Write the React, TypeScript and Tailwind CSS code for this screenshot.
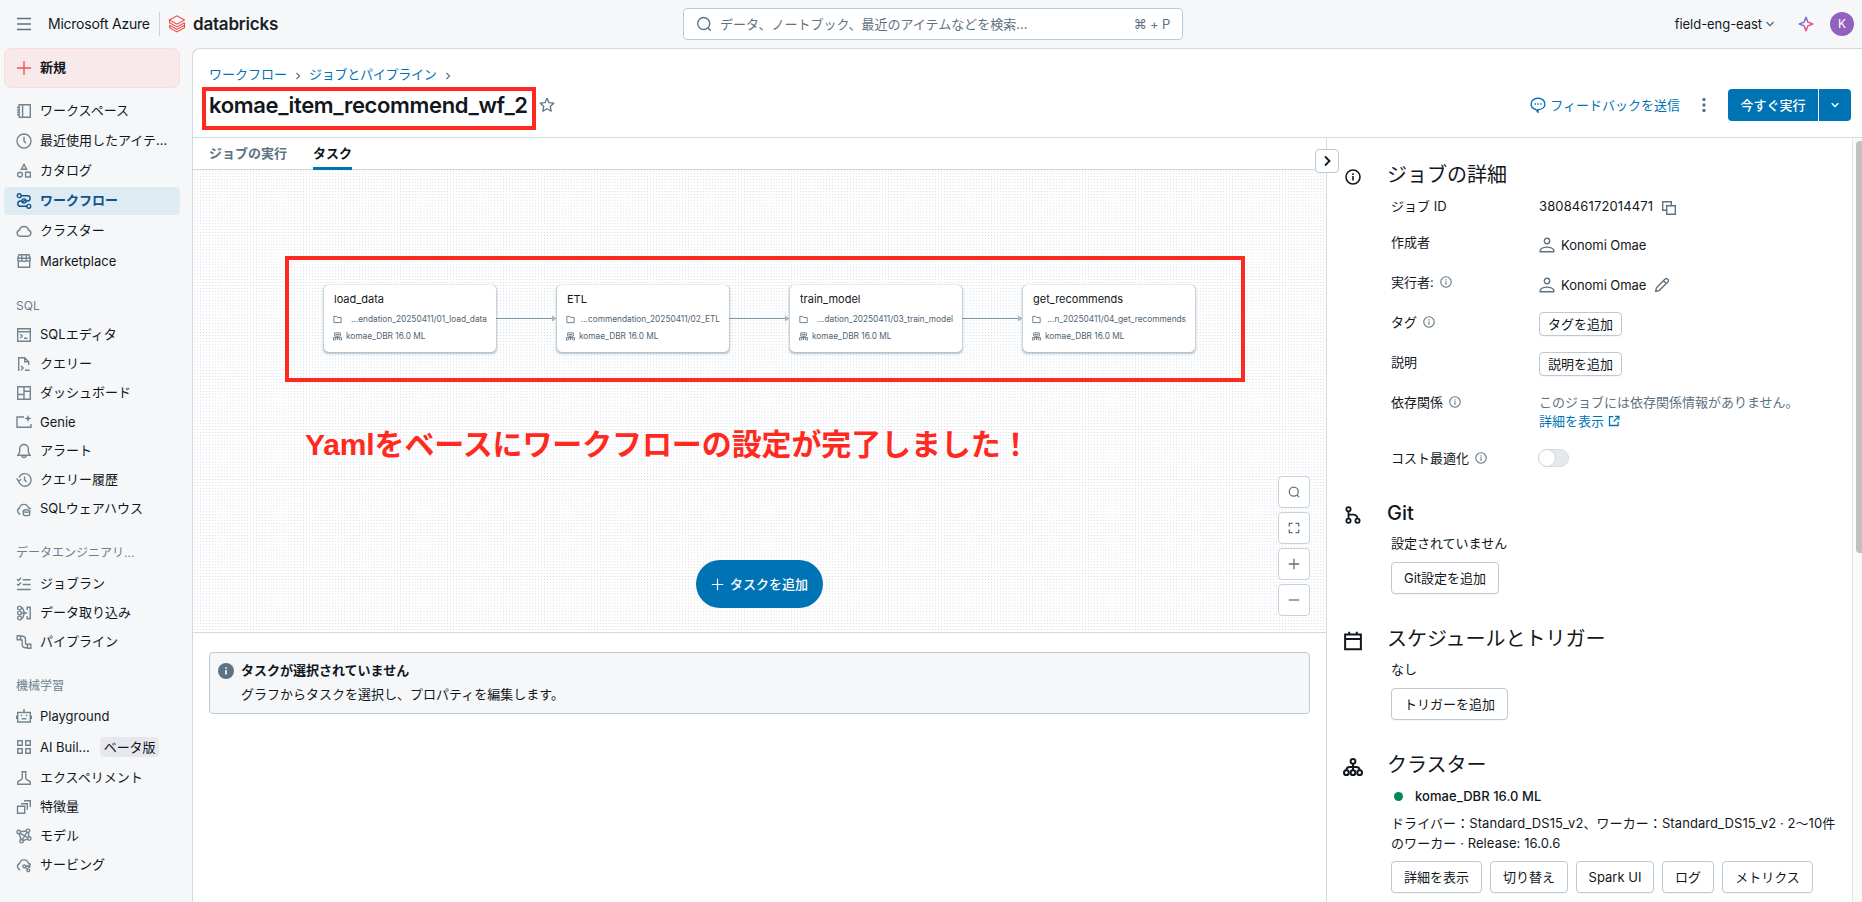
import React from "react";

type IconProps = { className?: string; size?: number; children?: React.ReactNode; sw?: number };

function Svg({ className = "", size = 16, sw = 1.4, children }: IconProps) {
  return (
    <svg
      width={size}
      height={size}
      viewBox="0 0 16 16"
      fill="none"
      stroke="currentColor"
      strokeWidth={sw}
      className={"shrink-0 " + className}
    >
      {children}
    </svg>
  );
}

const icons: Record<string, React.ReactNode> = {
  workspace: (
    <>
      <path d="M3.2 1.8h11.1v12.4H3.2zM6.6 1.8v12.4M1 4.3h2.2M1 6.8h2.2M1 9.3h2.2M1 11.8h2.2" />
    </>
  ),
  clock: (
    <>
      <circle cx="8" cy="8" r="7" />
      <path d="M8 3.8V8l2 2.2" />
    </>
  ),
  catalog: (
    <>
      <path d="M8 1.4 10.6 6.3H5.4z" />
      <circle cx="4" cy="11.6" r="2.4" />
      <path d="M9.6 9.3h4.7V14H9.6z" />
    </>
  ),
  workflow: (
    <>
      <circle cx="3.2" cy="2.700" r="1.900" />
      <circle cx="8" cy="8" r="2.100" />
      <circle cx="12.800" cy="13.300" r="1.900" />
      <path d="M5.100 2.700h6.400a2.650 2.650 0 0 1 0 5.300H10.100M5.900 8H4.500a2.650 2.650 0 0 0 0 5.300h6.400M6.300 9.600l3.300-3.200" />
    </>
  ),
  cloud: <path d="M4 13.300a3.200 3.200 0 0 1-.4-6.300 4.500 4.500 0 0 1 8.800 0A3.200 3.200 0 0 1 12 13.300z" />,
  market: (
    <>
      <path d="M2.300 8v6.300h11.400V8M3 1.800h10l1.300 3.600v.8a1.900 1.900 0 0 1-3.900 0 2.200 2.200 0 0 1-4.600 0 1.900 1.900 0 0 1-4.100 0v-.8zM5.800 6V2M10.300 6V2M1.800 5.200h12.400" />
    </>
  ),
  sqleditor: (
    <>
      <path d="M1.700 1.700h12.600v12.600H1.700zM1.700 4.700h12.600M4.300 7.300l2 1.800-2 1.800M8 11.200h3.500" />
    </>
  ),
  query: (
    <>
      <path d="M2.700 15V1.700h6l4 4V9M8.700 1.700v4h4M5 10l2.200 2L5 14.200M9 14.300h4.700" />
    </>
  ),
  dashboard: <path d="M1.700 1.700h12.600v12.600H1.700zM8 1.700v12.600M1.700 9.500H8M8 6.200h6.300" />,
  genie: (
    <>
      <path d="M8 3H1v10.300h14V10" />
      <path d="M12 .8l1 2.700 2.700 1-2.700 1-1 2.700-1-2.700-2.700-1 2.700-1z" fill="currentColor" stroke="none" />
    </>
  ),
  bell: <path d="M8 1.500a4.300 4.300 0 0 0-4.300 4.300v3L1.900 12.200h12.200L12.300 8.800v-3A4.300 4.300 0 0 0 8 1.500zM6 12.500a2 2 0 0 0 4 0" />,
  history: (
    <>
      <path d="M2.600 9.200A6.300 6.300 0 1 0 3 5.400M8.600 4.500V8l2 2M.6 6.400l2 2.800 2.600-2" />
    </>
  ),
  warehouse: (
    <>
      <path d="M4.300 13.200A3.300 3.300 0 0 1 3.500 7a4.600 4.600 0 0 1 8.900-.3 3 3 0 0 1 2.300 1.500" />
      <ellipse cx="10.500" cy="10" rx="3.200" ry="1.300" />
      <path d="M7.300 10v3.300c0 .8 1.400 1.300 3.200 1.300s3.200-.5 3.200-1.300V10" />
    </>
  ),
  jobruns: <path d="M1 3.200l1.500 1.300L5 1.700M1 8l1.500 1.300L5 6.500M6.700 3.700h8M6.700 8.500h8M1 13.500h13.700" />,
  ingest: (
    <>
      <circle cx="3.500" cy="3" r="1.900" />
      <circle cx="3.500" cy="8" r="1.900" />
      <circle cx="3.500" cy="13" r="1.900" />
      <path d="M5.400 3h1.200l1.900 5-1.900 5H5.400M5.400 8h5.800M11.200 5V2.200h3v11.600h-3V11" />
    </>
  ),
  pipeline: (
    <>
      <path d="M1.200 1.700h3.300v4H1.200zM11.500 10.300h3.300v4h-3.300z" />
      <path d="M4.500 2.200h2a3 3 0 0 1 3 3v3.500a2 2 0 0 0 2 2M4.500 5.300a1.700 1.700 0 0 1 1.700 1.700v3.800a3 3 0 0 0 3 3h2.300" />
    </>
  ),
  robot: (
    <>
      <path d="M1.700 4.500h12.600v9.500H1.700zM8 4.500V1M.7 7.500v3.500M15.300 7.500v3.500M5.500 10.800h5" />
      <path d="M4.700 7.500h1.500M9.800 7.500h1.500" />
    </>
  ),
  grid: <path d="M1.700 1.700h4.500v4.500H1.700zM9.800 1.700h4.500v4.500H9.800zM1.700 9.800h4.500v4.500H1.700zM9.800 9.800h4.500v4.500H9.800z" />,
  flask: <path d="M5.500 1.700h5M6.300 1.700v6.600c0 1.200-1 1.600-2.600 2.200-1.200.4-2 1-2 2v1.800h12.600v-1.800c0-1-.8-1.600-2-2-1.600-.6-2.600-1-2.600-2.200V1.700" />,
  feature: <path d="M1.500 7.300h7.200v7H1.500zM5 4.800h6.300v6M8 1.700h6.300V8" />,
  model: (
    <>
      <circle cx="2.700" cy="4" r="1.700" />
      <circle cx="12" cy="2.800" r="1.700" />
      <circle cx="13.300" cy="10.500" r="1.700" />
      <circle cx="5.500" cy="13.200" r="1.700" />
      <path d="M4.400 3.800l6-.8M12.200 4.500l.9 4.300M3.200 5.700l1.800 5.800M7 12.600l4.700-1.600M4 5.200l7.800 4.400M11 4.200 6.400 11.700" />
    </>
  ),
  serving: (
    <>
      <path d="M4.300 12.800A3.300 3.300 0 0 1 3.500 6.500a4.600 4.600 0 0 1 8.900-.3 3 3 0 0 1 2.300 1.700" />
      <circle cx="8.300" cy="9.300" r="1.400" />
      <circle cx="12.300" cy="13.300" r="1.400" />
      <circle cx="13" cy="9.300" r="1" />
      <path d="M9.300 10.300l2 2M9.700 9.300H12" />
    </>
  ),
  info: (
    <>
      <circle cx="8" cy="8" r="7" />
      <path d="M8 7v4.500M8 4.300v1.600" />
    </>
  ),
  user: (
    <>
      <circle cx="8" cy="4" r="2.700" />
      <path d="M1.200 14.800v-1.600C2 11.300 4.800 10.100 8 10.100s6 1.200 6.800 3.100v1.600z" />
    </>
  ),
  pencil: <path d="M1.700 14.300l.7-3.500 8.800-8.800a1.500 1.500 0 0 1 2.200 0l.6.600a1.500 1.500 0 0 1 0 2.200l-8.800 8.800zM9.500 3.700l2.800 2.800" />,
  copy: <path d="M5.700 5.700h8.600v8.600H5.700zM5.700 10.300h-4v-8.600h8.600v4" />,
  folder: <path d="M1.500 13.500v-11h5l1.700 2h6.300v9z" />,
  external: <path d="M7 2.200H2v11.800h11.500V9M9.500 1.700h5v5M14.300 2 7.500 8.800" />,
  search: (
    <>
      <circle cx="7.700" cy="7.500" r="6" />
      <path d="M11.800 11.800l3 3" />
    </>
  ),
  expand: <path d="M1.700 6V1.700H6M10 1.700h4.300V6M14.300 10v4.300H10M6 14.300H1.700V10" />,
  plus: <path d="M8 1v14M1 8h14" />,
  minus: <path d="M1 8h14" />,
  star: <path d="M8 1.300l2 4.400 4.800.5-3.600 3.200 1 4.800L8 11.800l-4.200 2.400 1-4.800L1.200 6.200 6 5.700z" strokeLinejoin="round" />,
  chat: (
    <>
      <path d="M8 1.300c3.900 0 6.900 2.300 6.900 5.600S11.900 12.500 8 12.600v2.600l-2.300-2.900C3 11.600 1.100 9.600 1.100 6.900 1.100 3.600 4.100 1.300 8 1.300z" />
      <path d="M4.500 7h1.400M7.300 7h1.400M10.100 7h1.400" />
    </>
  ),
  git: (
    <>
      <circle cx="4" cy="2.900" r="1.900" />
      <circle cx="4" cy="13.100" r="1.900" />
      <circle cx="12" cy="13.100" r="1.900" />
      <path d="M4 4.800v6.400M4 7.700h4.500a3.500 3.500 0 0 1 3.500 3.500" />
    </>
  ),
  calendar: <path d="M1.700 2.700h12.600v11.800H1.700zM1.700 6.300h12.600M5 .5v2.200M11 .5v2.200" />,
  cluster: (
    <>
      <circle cx="8" cy="3.500" r="1.900" />
      <circle cx="2.700" cy="12.500" r="1.900" />
      <circle cx="8" cy="12.500" r="1.900" />
      <circle cx="13.300" cy="12.500" r="1.900" />
      <path d="M8 5.400v5.200M2.700 10.600c0-2 1.600-2.600 3-2.600h4.600c1.400 0 3 .6 3 2.600" />
    </>
  ),
  server: <path d="M3 1.500h10v5.800H3zM5 4.400h6M8 7.300v7M1 14.500V10h14v4.500M4.800 10v4.500M11.200 10v4.500M1 14.400h2M13 14.400h2" />,
};

function Icon({ name, className, size, sw }: { name: string; className?: string; size?: number; sw?: number }) {
  return (
    <Svg className={className} size={size} sw={sw}>
      {icons[name]}
    </Svg>
  );
}

function NavItem({ icon, label, active, tall, badge }: { icon: string; label: string; active?: boolean; tall?: boolean; badge?: string }) {
  const latin = /^[\x20-\x7e]+$/.test(label);
  return (
    <div className={tall ? "flex h-[30px] items-center" : "flex h-[29px] items-center"}>
      <div
        className={
          "flex h-7 w-44 items-center gap-2 rounded px-3 whitespace-nowrap " +
          (active ? "bg-[#dfebf3] font-semibold text-[#0e538b]" : "text-[#11171c]")
        }
      >
        <Icon name={icon} className={active ? "text-[#0e538b]" : "text-[#74848f]"} />
        <span className={latin ? "leading-5" : "mb-[2px] leading-5"}>{label}</span>
        {badge && <span className="ml-[2px] rounded bg-[#e6e8ed] px-1 leading-5 tracking-[-0.150px]">{badge}</span>}
      </div>
    </div>
  );
}

function NavHeader({ children }: { children: React.ReactNode }) {
  return <div className="flex h-5 items-center px-3 text-[12px] whitespace-nowrap text-[#6b7f8e]">{children}</div>;
}

function Sidebar() {
  return (
    <aside className="flex w-[192px] shrink-0 flex-col pl-1">
      <div className="mb-2 flex h-10 w-44 items-center gap-2 rounded-lg border border-[#fbdcdc] bg-[#f8e9ea] px-[11px] font-semibold">
        <Icon name="plus" className="text-[#f0525a]" />
        <span className="mb-[2px]">新規</span>
      </div>
      <NavItem tall icon="workspace" label="ワークスペース" />
      <NavItem tall icon="clock" label="最近使用したアイテ..." />
      <NavItem tall icon="catalog" label="カタログ" />
      <NavItem tall icon="workflow" label="ワークフロー" active />
      <NavItem tall icon="cloud" label="クラスター" />
      <NavItem tall icon="market" label="Marketplace" />
      <div className="mt-5 mb-1">
        <NavHeader>SQL</NavHeader>
      </div>
      <NavItem icon="sqleditor" label="SQLエディタ" />
      <NavItem icon="query" label="クエリー" />
      <NavItem icon="dashboard" label="ダッシュボード" />
      <NavItem icon="genie" label="Genie" />
      <NavItem icon="bell" label="アラート" />
      <NavItem icon="history" label="クエリー履歴" />
      <NavItem icon="warehouse" label="SQLウェアハウス" />
      <div className="mt-5 mb-[6px]">
        <NavHeader>データエンジニアリ...</NavHeader>
      </div>
      <NavItem icon="jobruns" label="ジョブラン" />
      <NavItem icon="ingest" label="データ取り込み" />
      <NavItem icon="pipeline" label="パイプライン" />
      <div className="mt-5 mb-[5px]">
        <NavHeader>機械学習</NavHeader>
      </div>
      <NavItem tall icon="robot" label="Playground" />
      <div className="py-px">
        <NavItem tall icon="grid" label="AI Buil..." badge="ベータ版" />
      </div>
      <NavItem icon="flask" label="エクスペリメント" />
      <NavItem icon="feature" label="特徴量" />
      <NavItem icon="model" label="モデル" />
      <NavItem icon="serving" label="サービング" />
    </aside>
  );
}

function TopBar() {
  return (
    <header className="flex h-12 shrink-0 items-center">
      <div className="flex w-[683px] items-center">
        <svg width="16" height="16" viewBox="0 0 16 16" className="ml-4 text-[#5f7281]" stroke="currentColor" strokeWidth="1.500">
          <path d="M1 2.500h14M1 8h14M1 13.500h14" />
        </svg>
        <span className="ml-4 w-[103px] text-[14px] tracking-[-0.240px] whitespace-nowrap">Microsoft Azure</span>
        <span className="ml-2 h-6 w-px bg-[#c9d4de]" />
        <svg width="18" height="18" viewBox="0 0 18 18" className="ml-2" fill="none" stroke="#ee4a42" strokeWidth="1.050">
          <path d="M1.500 5 9 .9 16.500 5 9 9.100zM1.500 5v2.800L9 12l7.500-4.200M1.500 10.300 9 14.500l7.500-4.200V7.800M1.500 10.300v2.500L9 17l7.500-4.200v-2.500M1.500 7.800 9 11.900" />
        </svg>
        <span className="ml-[7px] text-[17px] leading-6 font-semibold tracking-[-0.200px] text-[#1b2127]">databricks</span>
      </div>
      <div className="flex h-8 w-[500px] items-center rounded border border-[#bccad6] bg-white px-3 text-[#5f7281]">
        <Icon name="search" />
        <span className="ml-2 grow">データ、ノートブック、最近のアイテムなどを検索...</span>
        <span className="text-[13px] tracking-[-0.200px]">⌘ + P</span>
      </div>
      <div className="flex grow items-center justify-end pr-2">
        <span className="tracking-[-0.050px]">field-eng-east</span>
        <svg width="10" height="10" viewBox="0 0 10 10" className="ml-[3px]" fill="none" stroke="#5f7281" strokeWidth="1.400">
          <path d="M1.500 3 5 6.700 8.500 3" />
        </svg>
        <svg width="16" height="16" viewBox="0 0 16 16" className="ml-[23px]" fill="none" stroke="url(#spark)" strokeWidth="1.500">
          <defs>
            <linearGradient id="spark" x1="0" y1="0" x2="1" y2="1">
              <stop offset="0.200" stopColor="#4a7fe8" />
              <stop offset="0.550" stopColor="#e24f9c" />
              <stop offset="0.900" stopColor="#f5544c" />
            </linearGradient>
          </defs>
          <path d="M8 1.300 9.900 6.100 14.700 8 9.900 9.900 8 14.700 6.100 9.900 1.300 8 6.100 6.100z" strokeLinejoin="round" />
        </svg>
        <span className="ml-4 flex size-6 items-center justify-center rounded-full bg-[#9062bd] text-[12px] text-white">K</span>
      </div>
    </header>
  );
}

function PageHeader() {
  return (
    <div className="flex h-[89px] shrink-0 border-b border-[#d1dae2] pl-4">
      <div className="flex grow flex-col">
        <div className="mt-[15px] flex h-5 items-center text-[#0073b4]">
          <span>ワークフロー</span>
          <Crumb />
          <span className="tracking-[-0.250px]">ジョブとパイプライン</span>
          <Crumb />
        </div>
        <div className="mt-[5px] flex h-8 items-center">
          <div className="relative">
            <h1 className="w-[322px] text-[22px] leading-8 font-semibold tracking-[-0.350px] whitespace-nowrap">komae_item_recommend_wf_2</h1>
            <div className="absolute -top-[2px] -left-[7px] h-[43px] w-[334px] border-4 border-[#ff2a1f]" />
          </div>
          <Icon name="star" className="ml-[8px] text-[#5f7281]" sw={1.3} />
        </div>
      </div>
      <div className="mt-10 mr-[11px] flex h-8 items-center">
        <Icon name="chat" className="text-[#0073b4]" />
        <span className="mb-px ml-1 text-[#0073b4]">フィードバックを送信</span>
        <svg width="16" height="16" viewBox="0 0 16 16" className="ml-4" fill="#5f7281">
          <circle cx="8" cy="2.500" r="1.700" />
          <circle cx="8" cy="8" r="1.700" />
          <circle cx="8" cy="13.500" r="1.700" />
        </svg>
        <button className="ml-4 flex h-8 w-[90px] items-center justify-center rounded-l bg-[#0073b4] font-medium text-white">今すぐ実行</button>
        <button className="ml-px flex h-8 w-8 items-center justify-center rounded-r bg-[#0073b4]">
          <svg width="10" height="10" viewBox="0 0 10 10" fill="none" stroke="#fff" strokeWidth="1.500">
            <path d="M1.700 3.200 5 6.500l3.300-3.300" />
          </svg>
        </button>
      </div>
    </div>
  );
}

function Crumb() {
  return (
    <svg width="6" height="8" viewBox="0 0 6 8" className="mx-[8px] mt-[3px]" fill="none" stroke="#5f7281" strokeWidth="1.200">
      <path d="M1.500 1 4.500 4 1.500 7" />
    </svg>
  );
}

function TaskNode({ title, path, pos }: { title: string; path: string; pos: string }) {
  return (
    <div
      className={
        "absolute top-[115px] flex h-[67px] w-[172px] flex-col rounded-[5px] bg-white px-[9px] pt-[6px] shadow-[0_1px_2px_0.500px_rgba(95,125,145,0.45)] " +
        pos
      }
    >
      <div className="pl-px text-[11px] leading-4">{title}</div>
      <div className="mt-[6px] flex h-3 items-center justify-between text-[8.300px] leading-3 whitespace-nowrap text-[#4f6474]">
        <Icon name="folder" size={9} />
        <span>{path}</span>
      </div>
      <div className="mt-[5px] flex h-3 items-center gap-[4px] text-[8.300px] leading-3 text-[#4f6474]">
        <Icon name="server" size={9} />
        <span>komae_DBR 16.0 ML</span>
      </div>
    </div>
  );
}

function Edge({ pos }: { pos: string }) {
  return (
    <svg width="61" height="8" viewBox="0 0 61 8" className={"absolute top-[144px] " + pos} fill="none">
      <path d="M0 4.500h58" stroke="#7d95a5" />
      <path d="M56 1.500 60.500 4.500 56 7.500z" fill="#a9b6c1" />
    </svg>
  );
}

function CanvasButton({ icon }: { icon: string }) {
  return (
    <button className="flex size-8 items-center justify-center rounded border border-[#c6d2dc] bg-white text-[#5f7281]">
      <Icon name={icon} size={12} sw={1.7} />
    </button>
  );
}

const DOT_PITCH = 2.94;
const dotRows = Array.from({ length: 157 }, (_, i) => `M1.200 ${(0.8 + i * DOT_PITCH).toFixed(2)}H1133`).join("");

function Canvas() {
  return (
    <div className="relative h-[463px] shrink-0 overflow-hidden border-b border-[#d1dae2]">
      <svg width="1133" height="462" className="absolute inset-0">
        <path d={dotRows} stroke="#d3dbe3" strokeWidth="1" strokeDasharray="1 1.94" fill="none" />
      </svg>
      <Edge pos="left-[303px]" />
      <Edge pos="left-[536px]" />
      <Edge pos="left-[769px]" />
      <TaskNode pos="left-[131px]" title="load_data" path="...endation_20250411/01_load_data" />
      <TaskNode pos="left-[364px]" title="ETL" path="...commendation_20250411/02_ETL" />
      <TaskNode pos="left-[597px]" title="train_model" path="...dation_20250411/03_train_model" />
      <TaskNode pos="left-[830px]" title="get_recommends" path="...n_20250411/04_get_recommends" />
      <div className="absolute top-[86px] left-[92px] h-[126px] w-[960px] border-4 border-[#ff2a1f]" />
      <div className="absolute top-[253px] left-[112px] font-['Liberation_Sans','Noto_Sans_CJK_JP',sans-serif] text-[30px] leading-[44px] font-bold tracking-[-0.120px] whitespace-nowrap text-[#ff2a1f]">
        Yamlをベースにワークフローの設定が完了しました！
      </div>
      <button className="absolute top-[390px] left-[503px] flex h-12 w-[127px] items-center rounded-[24px] bg-[#0073b4] pl-[15px] font-medium text-white">
        <Icon name="plus" size={13} />
        <span className="ml-[6px]">タスクを追加</span>
      </button>
      <div className="absolute top-[306px] left-[1085px] flex flex-col gap-1">
        <CanvasButton icon="search" />
        <CanvasButton icon="expand" />
        <CanvasButton icon="plus" />
        <CanvasButton icon="minus" />
      </div>
    </div>
  );
}

function Row({ label, info, h, children }: { label: string; info?: boolean; h: string; children: React.ReactNode }) {
  return (
    <div className={"flex items-start " + h}>
      <div className="flex h-5 w-[148px] items-center gap-[6px] leading-5">
        <span className="mb-px">{label}</span>
        {info && <Icon name="info" size={12} className="text-[#5f7281]" />}
      </div>
      {children}
    </div>
  );
}

function Section({ icon, iconSize, title, children }: { icon: string; iconSize: number; title: string; children: React.ReactNode }) {
  return (
    <section className="flex">
      <div className="flex h-8 w-[42px] shrink-0 items-center justify-start">
        <div className="flex w-4 justify-center">
          <Icon name={icon} size={iconSize} sw={1.6} />
        </div>
      </div>
      <div className="min-w-0 grow">
        <h2 className={title === "Git" ? "h-7 text-[20px] leading-7 font-medium" : "h-7 text-[20px] leading-7"}>{title}</h2>
        <div className="pl-[4px]">{children}</div>
      </div>
    </section>
  );
}

function Btn({ children, w }: { children: React.ReactNode; w: string }) {
  return (
    <button className={"flex items-center justify-center rounded border border-[#bccad6] bg-white whitespace-nowrap shadow-[0_1px_1px_rgba(0,0,0,0.04)] " + w}>
      {children}
    </button>
  );
}

function Person() {
  return (
    <>
      <Icon name="user" className="text-[#5f7281]" />
      <span className="tracking-[-0.050px]">Konomi Omae</span>
    </>
  );
}

function DetailsPanel() {
  return (
    <aside className="flex w-[536px] shrink-0 overflow-hidden border-l border-[#d1dae2]">
      <div className="flex w-[525px] shrink-0 flex-col gap-[31px] pt-[23px] pl-[18px]">
        <Section icon="info" iconSize={16} title="ジョブの詳細">
          <div className="mt-[7px]">
            <Row label="ジョブ ID" h="h-9">
              <div className="flex h-5 items-center gap-2">
                <span className="tracking-[0.120px]">380846172014471</span>
                <Icon name="copy" className="mt-1 text-[#5f7281]" />
              </div>
            </Row>
            <Row label="作成者" h="h-10">
              <div className="mt-[3px] flex h-5 items-center gap-[6px]">
                <Person />
              </div>
            </Row>
            <Row label="実行者:" info h="h-10">
              <div className="mt-[3px] flex h-5 items-center gap-[6px]">
                <Person />
                <Icon name="pencil" className="ml-[2px] text-[#5f7281]" />
              </div>
            </Row>
            <Row label="タグ" info h="h-10">
              <Btn w="h-6 w-[83px]">タグを追加</Btn>
            </Row>
            <Row label="説明" h="h-10">
              <Btn w="h-6 w-[83px]">説明を追加</Btn>
            </Row>
            <Row label="依存関係" info h="h-14">
              <div className="leading-5">
                <div className="text-[#5f7281]">このジョブには依存関係情報がありません。</div>
                <div className="-mt-px flex items-center gap-1 text-[#0073b4]">
                  詳細を表示
                  <Icon name="external" size={12} sw={1.7} />
                </div>
              </div>
            </Row>
            <Row label="コスト最適化" info h="h-5">
              <div className="mt-px -ml-px flex h-[18px] w-[31px] items-center rounded-full border border-[#d5dce3] bg-[#e5e9ee]">
                <div className="-ml-px size-[18px] rounded-full border border-[#ccd5dd] bg-white" />
              </div>
            </Row>
          </div>
        </Section>
        <Section icon="git" iconSize={18} title="Git">
          <div className="mt-[6px] mb-[9px] leading-5">設定されていません</div>
          <Btn w="h-8 w-[108px]">Git設定を追加</Btn>
        </Section>
        <Section icon="calendar" iconSize={20} title="スケジュールとトリガー">
          <div className="mt-[6px] mb-[9px] leading-5">なし</div>
          <Btn w="h-8 w-[117px]">トリガーを追加</Btn>
        </Section>
        <Section icon="cluster" iconSize={20} title="クラスター">
          <div className="mt-[7px] flex h-5 items-center font-medium">
            <span className="ml-[3px] size-[9px] rounded-full bg-[#00875c]" />
            <span className="ml-3 tracking-[0.050px]">komae_DBR 16.0 ML</span>
          </div>
          <div className="mt-[7px] mb-2 leading-5 tracking-[0.080px] whitespace-nowrap">
            ドライバー：Standard_DS15_v2、ワーカー：Standard_DS15_v2 · 2～10件
            <br />
            のワーカー · Release: 16.0.6
          </div>
          <div className="flex gap-2">
            <Btn w="h-8 w-[91px]">詳細を表示</Btn>
            <Btn w="h-8 w-[78px]">切り替え</Btn>
            <Btn w="h-8 w-[78px]">Spark UI</Btn>
            <Btn w="h-8 w-[52px]">ログ</Btn>
            <Btn w="h-8 w-[91px]">メトリクス</Btn>
          </div>
        </Section>
      </div>
      <div className="flex grow justify-end border-l border-[#e4e6e8] bg-[#fafafa] pt-[3px]">
        <div className="h-[412px] w-[6px] rounded-l-[4px] bg-[#c1c1c1]" />
      </div>
    </aside>
  );
}

function TaskArea() {
  return (
    <div className="relative flex w-[1133px] shrink-0 flex-col">
      <div className="flex h-8 shrink-0 items-center gap-[26px] border-b border-[#d1dae2] pl-4 font-semibold">
        <span className="pb-[2px] text-[#5f7281]">ジョブの実行</span>
        <span className="flex h-8 items-center border-b-[3px] border-[#0073b4] pt-px">タスク</span>
      </div>
      <Canvas />
      <div className="mx-4 mt-[19px] flex h-[62px] rounded border border-[#bccad6] bg-[#f6f7f9] pt-[7px] pl-2">
        <svg width="16" height="16" viewBox="0 0 16 16" className="mt-[3px]">
          <circle cx="8" cy="8" r="8" fill="#5f7281" />
          <path d="M8 7v4.500M8 4.300v1.500" stroke="#fff" strokeWidth="1.600" />
        </svg>
        <div className="ml-[7px]">
          <div className="leading-5 font-semibold">タスクが選択されていません</div>
          <div className="mt-1 leading-5">グラフからタスクを選択し、プロパティを編集します。</div>
        </div>
      </div>
      <button className="absolute top-[11px] left-[1122px] z-10 flex size-6 items-center justify-center rounded border border-[#bccad6] bg-white">
        <svg width="12" height="12" viewBox="0 0 12 12" fill="none" stroke="#11171c" strokeWidth="1.800">
          <path d="M4 1.500 8.500 6 4 10.500" />
        </svg>
      </button>
    </div>
  );
}

export default function App() {
  return (
    <div className="flex h-[902px] w-[1862px] flex-col overflow-hidden bg-[#f6f7f9] font-[Inter,'Noto_Sans_CJK_JP',sans-serif] text-[13px] leading-5 text-[#11171c]">
      <TopBar />
      <div className="flex min-h-0 grow">
        <Sidebar />
        <main className="flex w-[1670px] shrink-0 flex-col overflow-hidden rounded-tl-lg border-t border-l border-[#d1dae2] bg-white">
          <PageHeader />
          <div className="flex min-h-0 grow">
            <TaskArea />
            <DetailsPanel />
          </div>
        </main>
      </div>
    </div>
  );
}
